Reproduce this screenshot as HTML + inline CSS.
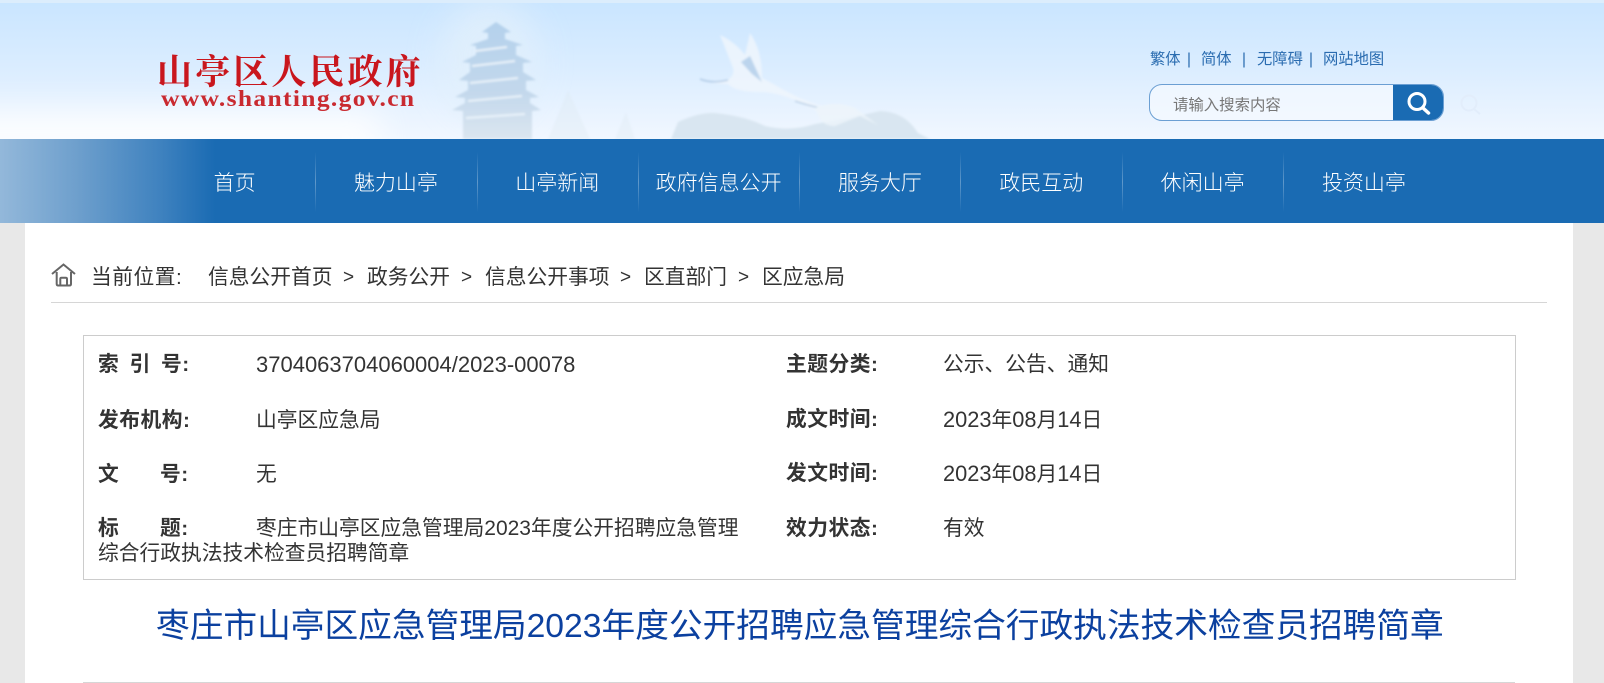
<!DOCTYPE html>
<html lang="zh-CN"><head><meta charset="utf-8"><title>山亭区人民政府</title>
<style>
*{margin:0;padding:0;box-sizing:border-box}
html,body{width:1604px;height:683px;overflow:hidden;background:#e8e8e8}
body{position:relative;font-family:"Liberation Sans","Noto Sans CJK SC",sans-serif;color:#333}
.a{position:absolute;white-space:nowrap}
.t{font-size:20.75px;line-height:28px;height:28px;color:#333}
.b{font-weight:bold;letter-spacing:.5px}
.d{font-size:21.8px}
.n{top:165px;height:38px;line-height:38px;width:161.3px;text-align:center;color:#fff;font-size:21px;font-weight:300}
.s{top:152px;width:1px;height:60px;background:linear-gradient(180deg,rgba(255,255,255,0),rgba(255,255,255,.3) 50%,rgba(255,255,255,0))}
.l{font-size:15.3px;line-height:20px;color:#2a6cb0;top:50px}
</style></head><body>
<svg class="a" style="left:0;top:0" width="1604" height="139" viewBox="0 0 1604 139">
<defs>
<linearGradient id="g" x1="0" y1="0" x2="0" y2="1"><stop offset="0" stop-color="#c9e5ff"/><stop offset=".5" stop-color="#dbedff"/><stop offset="1" stop-color="#f1f7ff"/></linearGradient>
<linearGradient id="pg" x1="0" y1="0" x2="0" y2="1"><stop offset="0" stop-color="#b4d1ec"/><stop offset=".6" stop-color="#c3d8ec"/><stop offset="1" stop-color="#dbe6f0"/></linearGradient>
<filter id="b1" x="-10%" y="-10%" width="120%" height="120%"><feGaussianBlur stdDeviation="1"/></filter>
<filter id="b2" x="-60%" y="-60%" width="220%" height="220%"><feGaussianBlur stdDeviation="16"/></filter>
</defs>
<rect width="1604" height="139" fill="url(#g)"/>
<rect x="-60" y="112" width="440" height="50" fill="#fff" opacity=".8" filter="url(#b2)"/>
<ellipse cx="490" cy="60" rx="50" ry="60" fill="#e2f0fc" opacity=".8" filter="url(#b2)"/>
<rect width="1604" height="3" fill="#dcedfc"/>
<g filter="url(#b1)">
<path d="M671 139L678 122Q700 112 715 113Q745 116 765 126Q790 132 815 124Q850 118 880 111Q905 112 918 133L930 139Z" fill="#d9e6f1"/>
<path d="M496 22L511 32L505 33V39L523 45L516 46V55L532 62L523 63V72L536 80L526 81V90L539 97L530 98V103L541 110L532 111V139H463V111L452 110L465 103V98L455 97L468 90V81L459 80L470 72V63L462 62L476 55V46L470 45L488 39V33L482 32Z" fill="url(#pg)"/>
<path d="M475 51L507 47M472 66L515 61M470 83L518 78M468 101L522 96M466 118L525 114" stroke="#e8f1f9" stroke-width="2.200" fill="none"/>
<path d="M548 139L560 110L568 90L578 112L590 139ZM615 139L626 112L635 139Z" fill="#dde8f2" opacity=".35"/>
<g opacity=".8">
<path d="M700 79Q715 84 728 80Q735 75 733 68L720 35Q735 42 745 55L750 33Q762 50 762 78L775 85Q800 100 822 106L815 110L795 100Q775 92 760 92Q735 92 728 84Q715 84 700 79Z" fill="#f1f7fd"/>
<path d="M741 62L750 56L762 82L752 74Z" fill="#b5cfe9"/>
<path d="M700 79Q712 84 728 80" stroke="#9dbbdb" stroke-width="1.300" fill="none"/>
<path d="M795 101Q810 106 820 108" stroke="#a8c3de" stroke-width="1.300" fill="none"/>
<path d="M815 108Q835 100 855 108L878 125L860 116L835 126Q822 126 818 115Z" fill="#eef5fb"/>
</g>
</g>
<g fill="none" stroke="#e2edfb" stroke-width="2"><circle cx="1469" cy="103" r="7.500"/><path d="M1474 109L1480 114"/></g>
</svg>

<div class="a" style="left:157px;top:49px;font:bold 35px/42px 'Noto Serif CJK SC','Liberation Serif',serif;letter-spacing:3.100px;color:#c9161d">山亭区人民政府</div>
<div class="a" style="left:161px;top:86px;font:bold 23px/26px 'Liberation Serif',serif;letter-spacing:1.200px;color:#c92a30;transform:scaleX(1.11);transform-origin:0 50%">www.shanting.gov.cn</div>

<div class="a l" style="left:1150px">繁体</div><div class="a l" style="left:1187px">|</div>
<div class="a l" style="left:1201px">简体</div><div class="a l" style="left:1242px">|</div>
<div class="a l" style="left:1257px">无障碍</div><div class="a l" style="left:1309px">|</div>
<div class="a l" style="left:1323px">网站地图</div>

<div class="a" style="left:1149px;top:84px;width:295px;height:37px;border:1px solid #6b9fd3;border-radius:13px;background:rgba(245,250,255,.7);overflow:hidden">
<div class="a" style="left:243px;top:-1px;width:52px;height:37px;background:#1a6bb3"></div>
<svg class="a" style="left:243px;top:-1px" width="52" height="37" viewBox="0 0 52 37"><g fill="none" stroke="#fff"><circle cx="24" cy="17.500" r="8" stroke-width="3"/><path d="M30 24L35.500 29" stroke-width="3.500" stroke-linecap="round"/></g></svg>
</div>
<div class="a" style="left:1173px;top:95px;font-size:15.400px;line-height:22px;color:#777">请输入搜索内容</div>

<div class="a" style="left:0;top:139px;width:1604px;height:84px;background:linear-gradient(90deg,#93b8da 0,#6fa0cd 75px,#3f82bf 160px,#1a6bb3 215px,#1a6bb3 100%)"></div>
<div class="a n" style="left:154px">首页</div>
<div class="a n" style="left:315.300px">魅力山亭</div>
<div class="a n" style="left:476.600px">山亭新闻</div>
<div class="a n" style="left:638px">政府信息公开</div>
<div class="a n" style="left:799.300px">服务大厅</div>
<div class="a n" style="left:960.600px">政民互动</div>
<div class="a n" style="left:1122px">休闲山亭</div>
<div class="a n" style="left:1283.300px">投资山亭</div>
<div class="a s" style="left:315px"></div><div class="a s" style="left:477px"></div><div class="a s" style="left:638px"></div><div class="a s" style="left:799px"></div><div class="a s" style="left:960px"></div><div class="a s" style="left:1122px"></div><div class="a s" style="left:1283px"></div>

<div class="a" style="left:25px;top:223px;width:1548px;height:460px;background:#fff"></div>

<svg class="a" style="left:50px;top:263px" width="27" height="24" viewBox="0 0 27 24"><path d="M2 11L13.500 1.500L25 11M6.700 9V21Q6.700 22.500 8.200 22.500H19.500Q21 22.500 21 21V9M10.300 22V16Q10.300 14.800 11.500 14.800H15.700Q17 14.800 17 16V22" fill="none" stroke="#666" stroke-width="2"/></svg>
<div class="a t b" style="left:91px;top:264px;font-weight:normal">当前位置:</div>
<div class="a t" style="left:208px;top:264px">信息公开首页</div>
<div class="a t" style="left:343px;top:264px;font-size:19px">&gt;</div>
<div class="a t" style="left:367px;top:264px">政务公开</div>
<div class="a t" style="left:461px;top:264px;font-size:19px">&gt;</div>
<div class="a t" style="left:485px;top:264px">信息公开事项</div>
<div class="a t" style="left:620px;top:264px;font-size:19px">&gt;</div>
<div class="a t" style="left:644px;top:264px">区直部门</div>
<div class="a t" style="left:738px;top:264px;font-size:19px">&gt;</div>
<div class="a t" style="left:762px;top:264px">区应急局</div>
<div class="a" style="left:51px;top:302px;width:1496px;height:1px;background:#d6d6d6"></div>

<div class="a" style="left:83px;top:335px;width:1433px;height:245px;border:1px solid #ccc"></div>

<div class="a t b" style="left:98px;top:351px;word-spacing:4px">索 引 号:</div>
<div class="a t" style="left:256px;top:351px;font-size:22px">3704063704060004/2023-00078</div>
<div class="a t b" style="left:98px;top:407px">发布机构:</div>
<div class="a t" style="left:256px;top:407px">山亭区应急局</div>
<div class="a t b" style="left:98px;top:461px">文</div><div class="a t b" style="left:160px;top:461px">号:</div>
<div class="a t" style="left:256px;top:461px">无</div>
<div class="a t b" style="left:98px;top:515px">标</div><div class="a t b" style="left:160px;top:515px">题:</div>
<div class="a t" style="left:256px;top:515px">枣庄市山亭区应急管理局<span style="font-size:21px">2023</span>年度公开招聘应急管理</div>
<div class="a t" style="left:98px;top:540px">综合行政执法技术检查员招聘简章</div>

<div class="a t b" style="left:786px;top:351px">主题分类:</div>
<div class="a t" style="left:943px;top:351px">公示、公告、通知</div>
<div class="a t b" style="left:786px;top:406px">成文时间:</div>
<div class="a t" style="left:943px;top:406px"><span class="d">2023</span>年<span class="d">08</span>月<span class="d">14</span>日</div>
<div class="a t b" style="left:786px;top:460px">发文时间:</div>
<div class="a t" style="left:943px;top:460px"><span class="d">2023</span>年<span class="d">08</span>月<span class="d">14</span>日</div>
<div class="a t b" style="left:786px;top:515px">效力状态:</div>
<div class="a t" style="left:943px;top:515px">有效</div>

<div class="a" style="left:156px;top:604px;font-size:33.700px;line-height:44px;color:#0b409f">枣庄市山亭区应急管理局2023年度公开招聘应急管理综合行政执法技术检查员招聘简章</div>
<div class="a" style="left:83px;top:682px;width:1432px;height:1px;background:#d6d6d6"></div>
</body></html>
